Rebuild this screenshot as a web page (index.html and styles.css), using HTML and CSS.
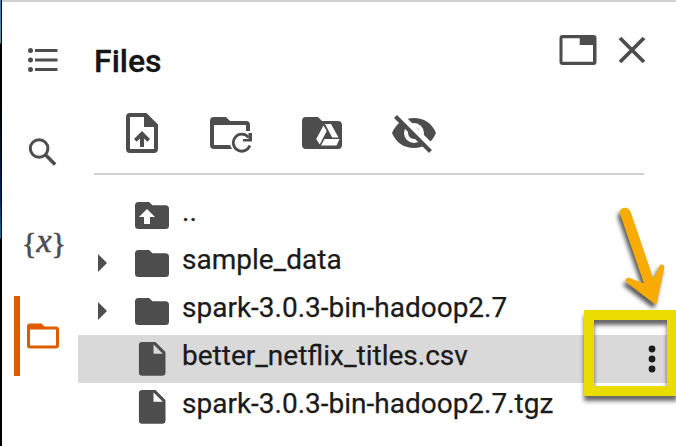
FILE: index.html
```html
<!DOCTYPE html>
<html lang="en">
<head>
<meta charset="utf-8">
<title>Files</title>
<link rel="stylesheet" href="styles.css">
</head>
<body>
<div class="app">
  <div class="edge"></div>
  <nav class="rail">
    <div class="rail-item">
      <svg width="30" height="24" viewBox="0 0 30 24" fill="currentColor"><circle cx="2.5" cy="2.5" r="2.5"/><circle cx="2.5" cy="12" r="2.5"/><circle cx="2.5" cy="21.5" r="2.5"/><path d="M7 1h22.500v3H7zM7 10.5h22.500v3H7zM7 20h22.500v3H7z"/></svg>
    </div>
    <div class="rail-item">
      <svg width="29" height="28" viewBox="-.6 0 29 28" fill="none" stroke="currentColor"><circle cx="10.5" cy="10.5" r="8.8" stroke-width="3"/><path d="M17.3 17.3 26.5 26.5" stroke-width="3.600"/></svg>
    </div>
    <div class="rail-item variables">{<i>x</i>}</div>
    <div class="rail-item active">
      <svg width="32" height="26" viewBox="0 0 32 26"><path d="M3 .5h11.500l3 3H29a3 3 0 0 1 3 3V22.500a3 3 0 0 1-3 3H3a3 3 0 0 1-3-3V3.500a3 3 0 0 1 3-3zM3 6.5V22.5H29V6.5z" fill="currentColor" fill-rule="evenodd"/></svg>
    </div>
  </nav>
  <main class="panel">
    <header class="head">
      <h1>Files</h1>
      <svg class="window" width="38" height="30" viewBox="0 0 38 30"><path d="M3 0h31.500a3 3 0 0 1 3 3v24a3 3 0 0 1-3 3H3.500a3 3 0 0 1-3-3V3a3 3 0 0 1 3-3zM3.500 3.2v23.600H34V10H20.7V3.2z" fill="currentColor" fill-rule="evenodd"/></svg>
      <svg class="close" width="28" height="28" viewBox="0 0 28 28"><path d="M2 2 26 26M26 2 2 26" stroke="currentColor" stroke-width="3.800"/></svg>
    </header>
    <div class="tools">
      <svg width="32" height="40" viewBox="0 0 32 40" fill="currentColor"><path fill-rule="evenodd" d="M4 0h16.5L32 11.5V36a4 4 0 0 1-4 4H4a4 4 0 0 1-4-4V4a4 4 0 0 1 4-4zM4 4v32h24V14H18V4z"/><path d="m16 18 8 8-2.7 2.8-3.3-3.3V34h-4v-8.500l-3.300 3.300L8 26z"/></svg>
      <svg width="42" height="40" viewBox="0 0 42 40" fill="none"><path fill="currentColor" fill-rule="evenodd" d="M4 4h12l4 4h16a4 4 0 0 1 4 4v6h-4v-6H4v20h16l2 4H4a4 4 0 0 1-4-4V8a4 4 0 0 1 4-4z"/><path d="M38.500 24.500a8.500 8.500 0 1 0 1.300 8" stroke="currentColor" stroke-width="2.800"/><path d="M38.500 20H42v8.500h-9V26h5.500z" fill="currentColor"/></svg>
      <svg width="40" height="40" viewBox="0 0 40 40"><path fill="currentColor" d="M4 4h12l4 4h16a4 4 0 0 1 4 4v20a4 4 0 0 1-4 4H4a4 4 0 0 1-4-4V8a4 4 0 0 1 4-4z"/><path fill="#fff" d="M23 11h6l7.500 13.500h-6.300zM21.500 12.500l3.200 5.500-7 13.500-3.500-5.500zM22.500 26h15l-3 6.500H19z"/></svg>
      <svg width="44" height="40" viewBox="0 0 44 40"><path fill="currentColor" d="M0 20C4 10 12.500 5 22 5s18 5 22 15c-4 10-12.500 15-22 15S4 30 0 20z"/><circle cx="22" cy="20" r="8" fill="currentColor" stroke="#fff" stroke-width="4"/><path d="M22 15.500a4.500 4.500 0 0 1 4.500 4.500" fill="none" stroke="#fff" stroke-width="1.500"/><path d="M5 0 42 37" stroke="#fff" stroke-width="7"/><path d="M3.500 3.500 38.500 38.500" stroke="currentColor" stroke-width="4"/></svg>
    </div>
    <div class="list">
      <div class="row"><span class="caret"></span>
        <svg class="icon" width="34" height="27" viewBox="0 0 34 27"><path fill="currentColor" d="M3.500 0H14l3.500 3.300h13a3.500 3.500 0 0 1 3.500 3.500V23.500a3.500 3.500 0 0 1-3.500 3.500h-27A3.500 3.500 0 0 1 0 23.500v-20A3.500 3.500 0 0 1 3.500 0z"/><path fill="#fff" d="m12 7 8 8h-5v7H9v-7H4z"/></svg><span class="name">..</span></div>
      <div class="row"><span class="caret open"></span>
        <svg class="icon" width="34" height="27" viewBox="0 0 34 27"><path fill="currentColor" d="M3.500 0H14l3.500 3.300h13a3.500 3.500 0 0 1 3.500 3.500V23.500a3.500 3.500 0 0 1-3.500 3.500h-27A3.500 3.500 0 0 1 0 23.500v-20A3.500 3.500 0 0 1 3.500 0z"/></svg><span class="name">sample_data</span></div>
      <div class="row"><span class="caret open"></span>
        <svg class="icon" width="34" height="27" viewBox="0 0 34 27"><path fill="currentColor" d="M3.500 0H14l3.500 3.300h13a3.500 3.500 0 0 1 3.500 3.500V23.500a3.500 3.500 0 0 1-3.500 3.500h-27A3.500 3.500 0 0 1 0 23.500v-20A3.500 3.500 0 0 1 3.500 0z"/></svg><span class="name">spark-3.0.3-bin-hadoop2.7</span></div>
      <div class="row selected"><span class="caret"></span>
        <svg class="icon" width="34" height="34" viewBox="0 0 34 34"><path fill="currentColor" fill-rule="evenodd" d="M7.200 0H20.500L30.500 10V30.500a3.300 3.300 0 0 1-3.300 3.300H7.200a3.300 3.300 0 0 1-3.300-3.300V3.300A3.300 3.300 0 0 1 7.200 0zM18.500 2.500v9.300h9.300z"/></svg><span class="name">better_netflix_titles.csv</span>
        <svg class="more" width="8" height="28" viewBox="0 0 8 28"><circle cx="4" cy="4" r="3.400"/><circle cx="4" cy="14" r="3.400"/><circle cx="4" cy="24" r="3.400"/></svg></div>
      <div class="row"><span class="caret"></span>
        <svg class="icon" width="34" height="34" viewBox="0 0 34 34"><path fill="currentColor" fill-rule="evenodd" d="M7.200 0H20.500L30.500 10V30.500a3.300 3.300 0 0 1-3.300 3.300H7.200a3.300 3.300 0 0 1-3.300-3.300V3.300A3.300 3.300 0 0 1 7.200 0zM18.500 2.500v9.300h9.300z"/></svg><span class="name">spark-3.0.3-bin-hadoop2.7.tgz</span></div>
    </div>
  </main>
  <svg class="arrow" width="56" height="116" viewBox="0 0 56 116"><path fill="#f8ab00" d="M10.200 14.500C9 11 10.500 8.800 13.500 8c3-.8 5.600.5 7 3.500L43.500 79l6-13c1.300-2.500 5.300-1.500 4.800 1.500L47 102c-.4 2-2 2.500-3.500 1.300L16.500 82.500c-2.200-2.200-.3-5.500 2.500-4.700L34 83.500z"/></svg>
  <div class="highlight"></div>
</div>
</body>
</html>
```
FILE: styles.css
```css
* { box-sizing: border-box; }
body { margin: 0; background: #fff; color: #1b1b1b; font-family: Roboto, "Liberation Sans", sans-serif; }
svg { display: block; flex: none; }
.app { position: relative; display: flex; width: 676px; height: 446px; overflow: hidden; }
.edge { width: 2px; background: linear-gradient(90deg, transparent 50%, #000 50%), linear-gradient(#457cb5 0, #6992a3 43px, #000 44px, #000 100px, #00285f 200px, #396a99 238px, #000 239px); }
.rail { width: 76px; padding-top: 12px; border-top: 2px solid #d0d0d0; color: #4d4d4d; }
.rail-item { height: 92px; display: flex; align-items: center; padding-left: 26px; }
.rail-item.active { color: #de5b00; padding-left: 12px; }
.rail-item.active::before { content: ""; width: 6px; height: 80px; margin-right: 7px; background: currentColor; }
.rail-item.variables { padding: 0 0 3px 20px; font: 30px/1 "Liberation Serif", serif; -webkit-text-stroke: .6px currentColor; }
.variables i { margin-top: -4px; font-size: 34px; }
.panel { flex: 1; border-top: 2px solid #d0d0d0; color: #4d4d4d; }
.head { height: 98px; display: flex; align-items: flex-start; padding: 33px 30px 0 16px; }
h1 { flex: 1; margin: 8px 0 0; color: #151515; font-size: 32px; line-height: 36px; font-weight: 500; -webkit-text-stroke: .3px currentColor; }
.window { margin-right: 21px; }
.close { margin-top: 1px; }
.tools { height: 75px; margin: 0 32px 0 16px; padding: 13px 0 0 32px; border-bottom: 2px solid #d0d0d0; display: flex; gap: 52px; }
.tools svg:nth-child(3) { margin-left: -2px; }
.tools svg:nth-child(4) { margin-left: -2px; }
.list { padding-top: 16px; }
.row { height: 48px; display: flex; align-items: center; padding-left: 20px; }
.row.selected { background: #d9d9d9; }
.caret { width: 37px; }
.caret.open::before { content: ""; display: block; width: 0; border: 9px solid transparent; border-left-color: #4d4d4d; border-right: 0; }
.name { flex: 1; margin-left: 13px; color: #1b1b1b; font-size: 28px; line-height: 32px; padding-bottom: 6px; -webkit-text-stroke: .25px currentColor; }
.more { margin-right: 20px; fill: #1b1b1b; }
.arrow { position: absolute; left: 610px; top: 200px; filter: drop-shadow(-2px 4px 2px rgba(0,0,0,.65)); }
.highlight { position: absolute; left: 584px; top: 310px; width: 93px; height: 86px; border: 10px solid #eadb00; filter: drop-shadow(0 5px 2px rgba(0,0,0,.6)); }
```
